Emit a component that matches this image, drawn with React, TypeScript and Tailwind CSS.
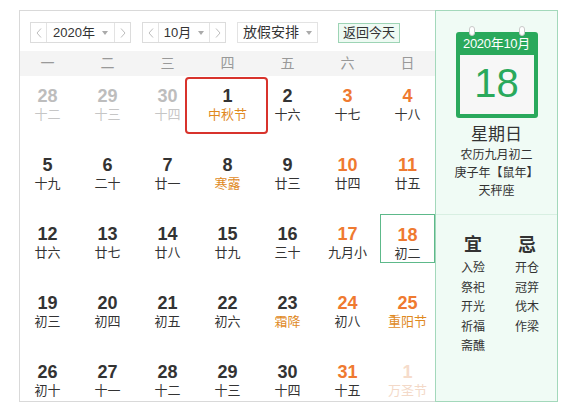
import React from "react";

type Day = {
  n: number;
  lunar: string;
  kind?: "prev" | "next";
  weekend?: boolean;
  fest?: boolean;
  today?: boolean;
};

const weeks: Day[][] = [
  [
    { n: 28, lunar: "十二", kind: "prev" },
    { n: 29, lunar: "十三", kind: "prev" },
    { n: 30, lunar: "十四", kind: "prev" },
    { n: 1, lunar: "中秋节", fest: true },
    { n: 2, lunar: "十六" },
    { n: 3, lunar: "十七", weekend: true },
    { n: 4, lunar: "十八", weekend: true },
  ],
  [
    { n: 5, lunar: "十九" },
    { n: 6, lunar: "二十" },
    { n: 7, lunar: "廿一" },
    { n: 8, lunar: "寒露", fest: true },
    { n: 9, lunar: "廿三" },
    { n: 10, lunar: "廿四", weekend: true },
    { n: 11, lunar: "廿五", weekend: true },
  ],
  [
    { n: 12, lunar: "廿六" },
    { n: 13, lunar: "廿七" },
    { n: 14, lunar: "廿八" },
    { n: 15, lunar: "廿九" },
    { n: 16, lunar: "三十" },
    { n: 17, lunar: "九月小", weekend: true },
    { n: 18, lunar: "初二", weekend: true, today: true },
  ],
  [
    { n: 19, lunar: "初三" },
    { n: 20, lunar: "初四" },
    { n: 21, lunar: "初五" },
    { n: 22, lunar: "初六" },
    { n: 23, lunar: "霜降", fest: true },
    { n: 24, lunar: "初八", weekend: true },
    { n: 25, lunar: "重阳节", weekend: true, fest: true },
  ],
  [
    { n: 26, lunar: "初十" },
    { n: 27, lunar: "十一" },
    { n: 28, lunar: "十二" },
    { n: 29, lunar: "十三" },
    { n: 30, lunar: "十四" },
    { n: 31, lunar: "十五", weekend: true },
    { n: 1, lunar: "万圣节", kind: "next" },
  ],
];

const weekdays = ["一", "二", "三", "四", "五", "六", "日"];
const good = ["入殓", "祭祀", "开光", "祈福", "斋醮"];
const bad = ["开仓", "冠笄", "伐木", "作梁"];

const font = { fontFamily: '"Liberation Sans", "Noto Sans CJK SC", sans-serif' };

function Chevron({ left }: { left?: boolean }) {
  return (
    <svg width="6" height="10" viewBox="0 0 6 10" className="block">
      <polyline
        points={left ? "5,0.5 1,5 5,9.5" : "1,0.5 5,5 1,9.5"}
        fill="none"
        stroke="#bdbdbd"
        strokeWidth="1"
      />
    </svg>
  );
}

function Caret() {
  return <span className="ml-[7px] inline-block h-0 w-0 border-x-[3.5px] border-t-[4px] border-x-transparent border-t-[#aaa]" />;
}

function Stepper({ label, width }: { label: string; width: string }) {
  return (
    <div className={`flex h-[21px] items-stretch border border-[#dcdcdc] bg-white ${width}`}>
      <div className="flex w-[16px] items-center justify-center border-r border-[#e3e3e3]">
        <Chevron left />
      </div>
      <div className="flex flex-1 items-center justify-center text-[13px] text-[#333]">
        {label}
        <Caret />
      </div>
      <div className="flex w-[16px] items-center justify-center border-l border-[#e3e3e3]">
        <Chevron />
      </div>
    </div>
  );
}

function Cell({ d }: { d: Day }) {
  let numColor = "text-[#333]";
  let lunarColor = "text-[#333]";
  if (d.weekend) numColor = "text-[#ef7a30]";
  if (d.fest) lunarColor = "text-[#e08a1f]";
  if (d.kind === "prev") {
    numColor = "text-[#bdbdbd]";
    lunarColor = "text-[#c6c6c6]";
  }
  if (d.kind === "next") {
    numColor = "text-[#f6dccb]";
    lunarColor = "text-[#f3d9c8]";
  }
  return (
    <div
      className={`flex h-[49px] flex-col items-center pt-[10px] ${
        d.today ? "border border-[#5db98a] pt-[9px]" : ""
      }`}
    >
      <div className={`text-[18px] font-bold leading-[20px] ${numColor}`}>{d.n}</div>
      <div className={`text-[13px] leading-[18px] ${lunarColor}`}>{d.lunar}</div>
    </div>
  );
}

export default function App() {
  return (
    <div className="min-h-[419px] bg-white pl-[19px] pt-[10px]" style={font}>
      <div className="flex h-[392px] w-[539px]">
        {/* Month grid */}
        <div className="relative w-[416px] border-y border-l border-[#d9d9d9]">
          <div className="flex items-center pl-[10px] pt-[11px]">
            <Stepper label="2020年" width="w-[101px]" />
            <div className="ml-[11px]">
              <Stepper label="10月" width="w-[84px]" />
            </div>
            <div className="ml-[11px] flex h-[21px] w-[81px] items-center justify-center border border-[#e3e3e3] bg-white text-[14px] text-[#333]">
              放假安排
              <Caret />
            </div>
            <div className="ml-[20px] flex h-[20px] w-[62px] items-center justify-center border border-[#9dd4b5] bg-[#eefaf3] text-[13px] text-[#333]">
              返回今天
            </div>
          </div>

          <div className="mt-[8px] grid h-[25px] grid-cols-[repeat(7,55px)] items-center gap-x-[5px] bg-[#f4f4f4]">
            {weekdays.map((w) => (
              <div key={w} className="text-center text-[14px] text-[#999]">
                {w}
              </div>
            ))}
          </div>

          <div className="grid grid-cols-[repeat(7,55px)] gap-x-[5px] gap-y-[20px]">
            {weeks.flat().map((d, i) => (
              <Cell key={i} d={d} />
            ))}
          </div>

          {/* selected day marker */}
          <div className="pointer-events-none absolute left-[165px] top-[66px] h-[57px] w-[83px] rounded-[4px] border-[2.5px] border-[#d8332c]" />
        </div>

        {/* Today panel */}
        <div className="flex w-[123px] flex-col border border-[#a3d8bb] bg-[#f0fbf5]">
          <div className="flex flex-col items-center">
            <div className="relative mt-[21px] h-[86px] w-[82px] rounded-[3px] bg-[#2aa95c] px-[4px] pb-[4px]">
              <span className="absolute left-[13px] top-[-6px] h-[10px] w-[6px] rounded-full border border-[#c9c9c9] bg-white" />
              <span className="absolute left-[63px] top-[-6px] h-[10px] w-[6px] rounded-full border border-[#c9c9c9] bg-white" />
              <div className="flex h-[23px] items-center justify-center text-[13px] tracking-[-0.3px] text-white">2020年10月</div>
              <div className="flex h-[59px] items-center justify-center bg-[#f7f7f7] pb-[4px] text-[40px] leading-none text-[#2aa95c]">
                18
              </div>
            </div>
            <div className="mt-[6px] text-[17px] leading-[22px] text-[#333]">星期日</div>
            <div className="text-[12px] leading-[18px] text-[#333]">农历九月初二</div>
            <div className="text-[12px] leading-[18px] text-[#333]">庚子年【鼠年】</div>
            <div className="text-[12px] leading-[18px] text-[#333]">天秤座</div>
          </div>
          <div className="mt-[14px] border-t border-[#d8efe2]" />
          <div className="flex justify-center gap-[4px] pl-[7px] pt-[18px]">
            {[
              { h: "宜", list: good },
              { h: "忌", list: bad },
            ].map((c) => (
              <div key={c.h} className="flex w-[50px] flex-col items-center">
                <div className="text-[18px] font-bold leading-[24px] text-[#333]">{c.h}</div>
                <div className="mt-[2px]">
                  {c.list.map((t) => (
                    <div key={t} className="text-[12px] leading-[19.5px] text-[#333]">
                      {t}
                    </div>
                  ))}
                </div>
              </div>
            ))}
          </div>
        </div>
      </div>
    </div>
  );
}
